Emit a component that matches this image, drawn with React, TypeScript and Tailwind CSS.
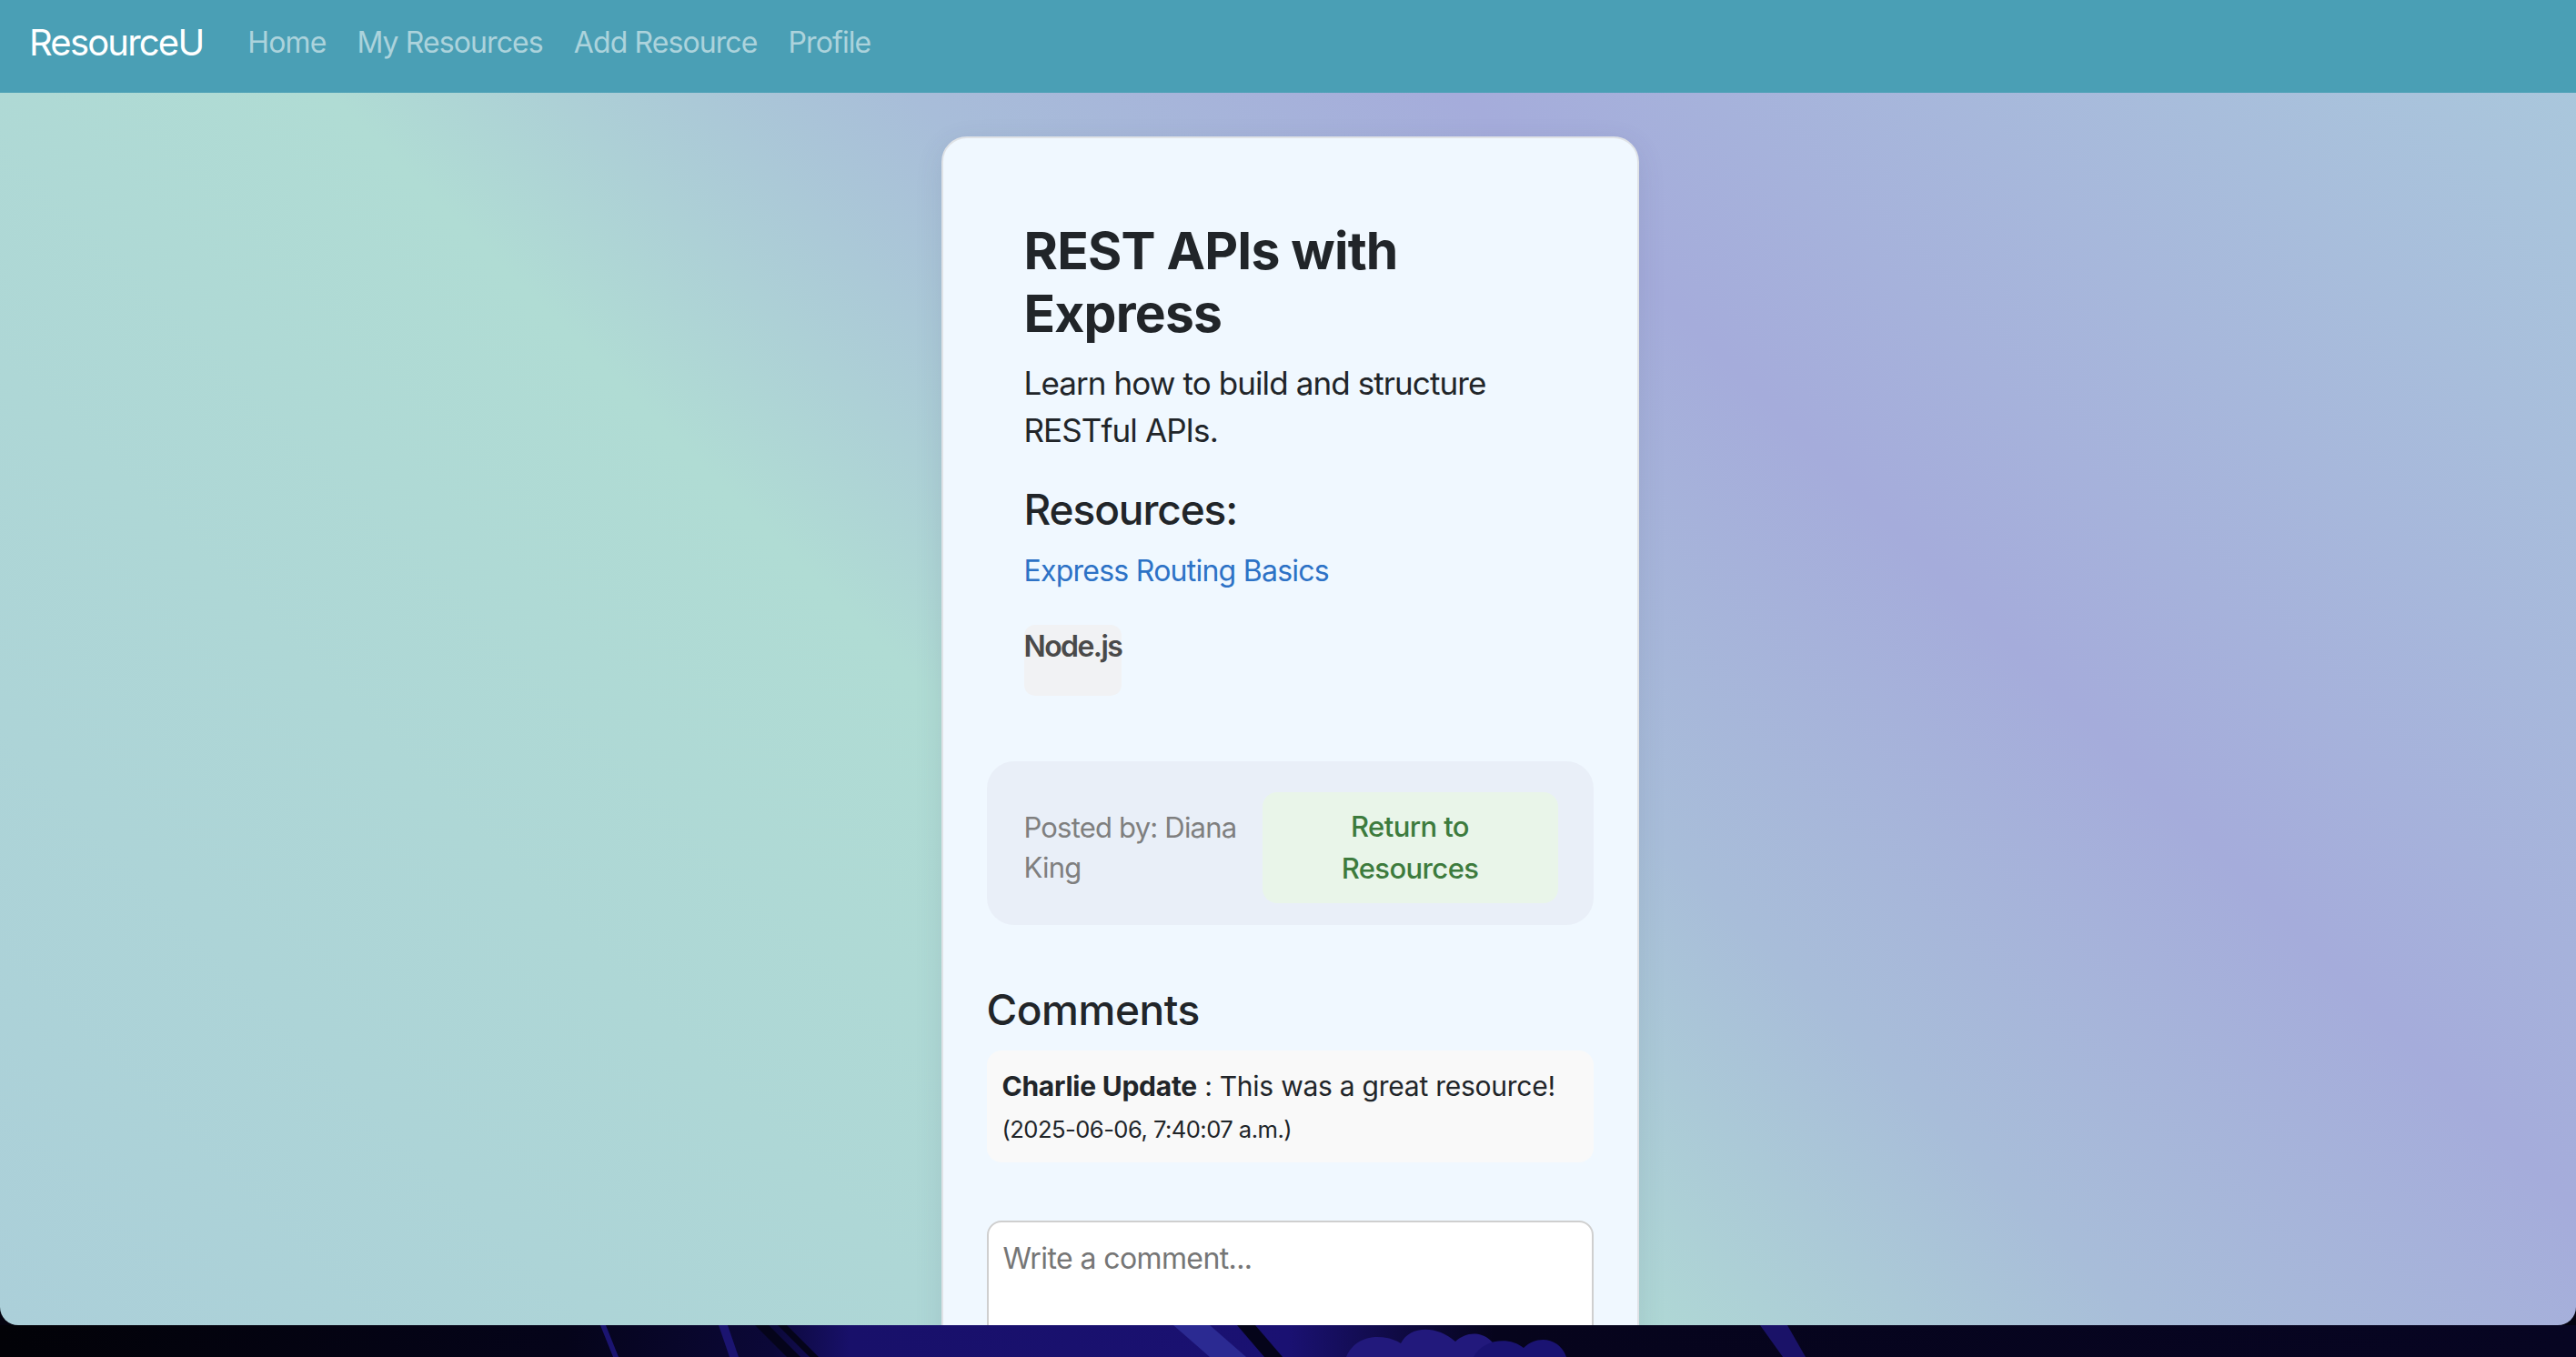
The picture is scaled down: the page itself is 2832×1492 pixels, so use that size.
export default function App() {
  return (
    <div className="h-[1492px] w-full bg-[#04030f] overflow-hidden font-[Inter,sans-serif] text-[#212529]">
      {/* browser window */}
      <div className="h-[1457px] rounded-b-[20px] overflow-hidden flex flex-col bg-[linear-gradient(45deg,#abcfd9_0%,#b0dcd4_40%,#a8bdd9_55%,#a5acdb_69%,#aac9dc_100%)]">
        {/* NAVBAR */}
        <nav className="h-[102px] shrink-0 bg-[#4a9fb5] flex items-center px-[32px] pb-[8px]">
          <span className="text-[40px] text-white tracking-[-1.8px]">ResourceU</span>
          <div className="flex gap-[34px] ml-[49px] text-[32px] tracking-[-0.9px] text-[#acd3dc]">
            <span>Home</span>
            <span>My Resources</span>
            <span>Add Resource</span>
            <span>Profile</span>
          </div>
        </nav>

        {/* CONTENT */}
        <div className="flex justify-center pt-[48px] pl-[4px]">
          <div className="w-[767px] shrink-0 rounded-[28px] border-2 border-[#dfe2e6] bg-[#f0f8ff] shadow-[0_8px_30px_rgba(60,70,110,0.12)] p-[48px]">
            <div className="p-[41px]">
              <h2 className="text-[57px] leading-[69px] font-bold tracking-[-0.8px]">REST APIs with Express</h2>
              <p className="mt-[16px] text-[35px] leading-[52px] tracking-[-0.9px]">Learn how to build and structure RESTful APIs.</p>
              <h4 className="mt-[34px] text-[46px] leading-[55px] font-medium tracking-[-1.1px]">Resources:</h4>
              <div className="mt-[16px] text-[32px] leading-[48px] tracking-[-0.75px] text-[#2d72c6]">Express Routing Basics</div>
              <div className="mt-[35px]">
                <span className="inline-block rounded-[12px] bg-[#f1f2f4] pb-[30px] text-[32px] leading-[48px] font-semibold tracking-[-1.6px] text-[#4a4a4a]">
                  Node.js
                </span>
              </div>
            </div>

            {/* POSTED BY */}
            <div className="mt-[31px] rounded-[30px] bg-[#e9eff8] pl-[41px] pr-[39px] pt-[34px] pb-[24px] flex items-center justify-between">
              <div className="w-[240px] text-[31px] leading-[44px] tracking-[-0.8px] text-[#7f7f7f]">Posted by: Diana King</div>
              <div className="w-[325px] rounded-[16px] bg-[#e9f5e9] px-[40px] py-[15px] text-center text-[31px] leading-[46px] font-medium tracking-[-0.6px] text-[#3d7b3d]">
                Return to Resources
              </div>
            </div>

            {/* COMMENTS */}
            <h4 className="mt-[66px] text-[46px] leading-[55px] font-medium tracking-[-0.45px]">Comments</h4>
            <div className="mt-[17px] rounded-[16px] bg-[#f9f9f9] px-[17px] pt-[17px] pb-[17px]">
              <div className="text-[30px] leading-[45px] tracking-[-0.25px]">
                <b className="font-bold">Charlie Update</b> : This was a great resource!
              </div>
              <div className="mt-[6px] text-[25.6px] leading-[38px] tracking-[-0.55px]">(2025-06-06, 7:40:07 a.m.)</div>
            </div>

            <textarea
              placeholder="Write a comment..."
              className="mt-[64px] block w-full h-[200px] rounded-[16px] border-2 border-[#cfcfcf] bg-white px-[16px] pt-[16px] text-[32px] leading-[48px] tracking-[-0.6px] placeholder:text-[#767676] resize-none"
            />
            <div className="h-[200px]"></div>
          </div>
        </div>
      </div>

      {/* desktop wallpaper peeking under the window */}
      <svg width="2832" height="35" viewBox="0 0 2832 35" className="block">
        <defs>
          <linearGradient id="wp" x1="0" x2="1" y1="0" y2="0">
            <stop offset="0" stopColor="#020207" />
            <stop offset="0.22" stopColor="#05041a" />
            <stop offset="0.3" stopColor="#0b0838" />
            <stop offset="0.33" stopColor="#18106a" />
            <stop offset="0.5" stopColor="#1a1172" />
            <stop offset="0.58" stopColor="#06041c" />
            <stop offset="1" stopColor="#070522" />
          </linearGradient>
        </defs>
        <rect width="2832" height="35" fill="url(#wp)" />
        <polygon points="660,0 666,0 680,35 674,35" fill="#1b1470" />
        <polygon points="790,0 800,0 812,35 802,35" fill="#1b1470" />
        <polygon points="830,0 845,0 880,35 865,35" fill="#05041a" />
        <polygon points="855,0 865,0 900,35 890,35" fill="#05041a" />
        <polygon points="1290,0 1330,0 1370,35 1330,35" fill="#2b2a92" />
        <polygon points="1360,0 1380,0 1410,35 1390,35" fill="#05041a" />
        <path d="M1480,35 C1490,10 1520,8 1540,20 C1550,0 1580,0 1600,18 C1615,4 1640,6 1650,35 Z" fill="#22197c" />
        <path d="M1620,35 C1630,15 1660,12 1675,25 C1690,10 1715,14 1722,35 Z" fill="#1a1372" />
        <polygon points="1935,0 1965,0 1985,35 1960,35" fill="#1a1268" />
      </svg>
    </div>
  );
}
